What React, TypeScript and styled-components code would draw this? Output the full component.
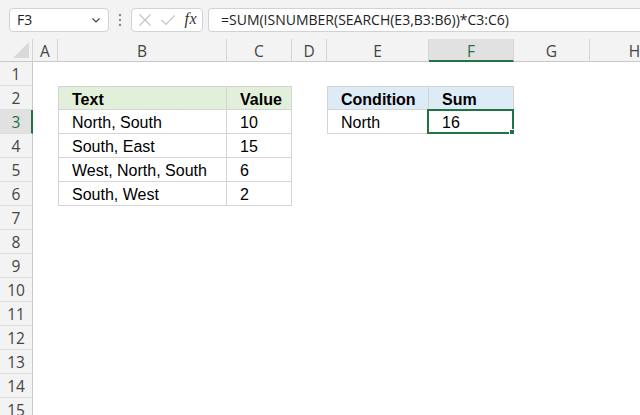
import React from 'react';
import styled, { createGlobalStyle, css } from 'styled-components';

const GlobalStyle = createGlobalStyle`
  html, body {
    margin: 0;
    padding: 0;
    background: #fff;
  }
  * {
    box-sizing: border-box;
  }
`

const EXCEL_GREEN = '#217346';
const UI_FONT = `"Open Sans", "Noto Sans", sans-serif`;
const CELL_FONT = `"Liberation Sans", Arial, sans-serif`;

const COLUMNS = ['A', 'B', 'C', 'D', 'E', 'F', 'G', 'H'];
const ROW_COUNT = 15;

type CellData = { value: string, bold?: boolean, fill?: string };

const cells: Record<string, CellData> = {
  B2: { value: 'Text', bold: true, fill: '#e2efda' },
  C2: { value: 'Value', bold: true, fill: '#e2efda' },
  B3: { value: 'North, South' },
  C3: { value: '10' },
  B4: { value: 'South, East' },
  C4: { value: '15' },
  B5: { value: 'West, North, South' },
  C5: { value: '6' },
  B6: { value: 'South, West' },
  C6: { value: '2' },
  E2: { value: 'Condition', bold: true, fill: '#ddebf7' },
  F2: { value: 'Sum', bold: true, fill: '#ddebf7' },
  E3: { value: 'North' },
  F3: { value: '16' },
};

// table ranges that get a thin border: [firstCol, lastCol, firstRow, lastRow]
const ranges: [number, number, number, number][] = [
  [1, 2, 2, 6],
  [4, 5, 2, 3],
];

const Window = styled.div`
  width: 640px;
  height: 415px;
  overflow: hidden;
  background: #fff;
`

const Toolbar = styled.div`
  height: 39px;
  background: #f3f3f3;
  display: flex;
  align-items: center;
  padding-left: 9px;
`

const BoxBase = css`
  height: 24px;
  background: #fff;
  border: 1px solid #d2d2d2;
  border-radius: 4px;
  display: flex;
  align-items: center;
`

const NameBox = styled.div`
  ${BoxBase};
  width: 100px;
  padding: 0 6px 0 7px;
  justify-content: space-between;
  font-family: ${UI_FONT};
  font-size: 14px;
  color: #222;
`

const Dots = styled.div`
  width: 22px;
  display: flex;
  justify-content: center;
`

const FxBox = styled.div`
  ${BoxBase};
  width: 72px;
  padding: 0 5px 0 6px;
  justify-content: space-between;
`

const FxLabel = styled.span`
  font-family: "Liberation Serif", "DejaVu Serif", serif;
  font-style: italic;
  font-size: 16px;
  color: #333;
  letter-spacing: 0.5px;
  margin-top: -2px;
`

const FormulaBox = styled.div`
  ${BoxBase};
  flex: 1;
  margin-left: 5px;
  border-right: none;
  border-radius: 4px 0 0 4px;
  padding-left: 12px;
  font-family: ${UI_FONT};
  font-size: 14px;
  color: #222;
  white-space: nowrap;
`

const Sheet = styled.div`
  display: grid;
  width: 680px;
  grid-template-columns: 33px 25px 169px 65px 35px 102px 85px 76px 1fr;
  grid-template-rows: 23px repeat(${ROW_COUNT}, 24px);
`

const Corner = styled.div`
  background: #f3f3f3;
  border-right: 1px solid #d5d5d5;
  border-bottom: 1px solid #c8c8c8;
  display: flex;
  align-items: flex-end;
  justify-content: flex-end;
  padding: 0 3px 3px 0;
`

const ColHeader = styled.div<{ $active?: boolean }>`
  background: ${p => p.$active ? '#e1e1e1' : '#f3f3f3'};
  border-right: 1px solid #d5d5d5;
  border-bottom: ${p => p.$active ? `2px solid ${EXCEL_GREEN}` : '1px solid #c8c8c8'};
  display: flex;
  align-items: center;
  justify-content: center;
  font-family: ${UI_FONT};
  font-size: 15.5px;
  color: ${p => p.$active ? EXCEL_GREEN : '#444'};
  padding-top: ${p => p.$active ? '2px' : '1px'};
`

const RowHeader = styled.div<{ $active?: boolean }>`
  background: ${p => p.$active ? '#e1e1e1' : '#f3f3f3'};
  border-right: ${p => p.$active ? `2px solid ${EXCEL_GREEN}` : '1px solid #c8c8c8'};
  border-bottom: 1px solid #dedede;
  display: flex;
  align-items: center;
  justify-content: center;
  font-family: ${UI_FONT};
  font-size: 15.5px;
  color: ${p => p.$active ? EXCEL_GREEN : '#444'};
  padding-left: ${p => p.$active ? '1px' : '0'};
  padding-top: 1px;
`

const Cell = styled.div<{ $fill?: string, $bold?: boolean, $bordered?: boolean, $top?: boolean, $left?: boolean }>`
  position: relative;
  background: ${p => p.$fill || '#fff'};
  display: flex;
  align-items: center;
  padding: 3px 0 0 13px;
  font-family: ${CELL_FONT};
  font-size: 16px;
  font-weight: ${p => p.$bold ? 700 : 400};
  color: #000;
  white-space: nowrap;
  ${p => p.$bordered && css`
    border-right: 1px solid #d4d4d4;
    border-bottom: 1px solid #d4d4d4;
  `}
  ${p => p.$top && css`border-top: 1px solid #d4d4d4;`}
  ${p => p.$left && css`border-left: 1px solid #d4d4d4;`}
`

const Selection = styled.div`
  position: absolute;
  left: -2px;
  top: -1px;
  right: -1px;
  bottom: -1px;
  border: 2px solid ${EXCEL_GREEN};
  pointer-events: none;
`

const FillHandle = styled.div`
  position: absolute;
  right: -4px;
  bottom: -4px;
  width: 6px;
  height: 6px;
  background: ${EXCEL_GREEN};
  outline: 1px solid #fff;
`

const Chevron = () => (
  <svg width="12" height="12" viewBox="0 0 12 12">
    <path d="M2.5 4.5 L6 8 L9.5 4.5" fill="none" stroke="#444" strokeWidth="1.2" />
  </svg>
)

const VerticalDots = () => (
  <svg width="4" height="14" viewBox="0 0 4 14">
    <circle cx="2" cy="2" r="1.2" fill="#8c8c8c" />
    <circle cx="2" cy="7" r="1.2" fill="#8c8c8c" />
    <circle cx="2" cy="12" r="1.2" fill="#8c8c8c" />
  </svg>
)

const CancelIcon = () => (
  <svg width="14" height="14" viewBox="0 0 14 14">
    <path d="M1.5 1.5 L12.5 12.5 M12.5 1.5 L1.5 12.5" stroke="#c4c4c4" strokeWidth="1.2" fill="none" />
  </svg>
)

const EnterIcon = () => (
  <svg width="16" height="14" viewBox="0 0 16 14">
    <path d="M1.5 7 L6 11.5 L14.5 2.5" stroke="#c4c4c4" strokeWidth="1.2" fill="none" />
  </svg>
)

const CornerTriangle = () => (
  <svg width="16" height="16" viewBox="0 0 16 16">
    <path d="M16 0 L16 16 L0 16 Z" fill="#d9d9d9" />
  </svg>
)

const inRange = (c: number, r: number) =>
  ranges.find(([c1, c2, r1, r2]) => c >= c1 && c <= c2 && r >= r1 && r <= r2);

export default function App() {
  const activeCol = 'F';
  const activeRow = 3;

  const rows = Array(ROW_COUNT).fill(null).map((_, i) => {
    const row = i + 1;
    return (
      <React.Fragment key={row}>
        <RowHeader $active={row === activeRow}>{row}</RowHeader>
        {COLUMNS.map((col, ci) => {
          const data = cells[`${col}${row}`];
          const range = inRange(ci, row);
          const isSelected = col === activeCol && row === activeRow;
          return (
            <Cell
              key={col}
              $fill={data?.fill}
              $bold={data?.bold}
              $bordered={!!range}
              $top={!!range && row === range[2]}
              $left={!!range && ci === range[0]}
            >
              {data?.value}
              {isSelected && <Selection><FillHandle /></Selection>}
            </Cell>
          );
        })}
      </React.Fragment>
    );
  });

  return (
    <Window>
      <GlobalStyle />
      <Toolbar>
        <NameBox>
          <span>F3</span>
          <Chevron />
        </NameBox>
        <Dots><VerticalDots /></Dots>
        <FxBox>
          <CancelIcon />
          <EnterIcon />
          <FxLabel>fx</FxLabel>
        </FxBox>
        <FormulaBox>=SUM(ISNUMBER(SEARCH(E3,B3:B6))*C3:C6)</FormulaBox>
      </Toolbar>
      <Sheet>
        <Corner><CornerTriangle /></Corner>
        {COLUMNS.map(col => (
          <ColHeader key={col} $active={col === activeCol}>{col}</ColHeader>
        ))}
        {rows}
      </Sheet>
    </Window>
  );
}
